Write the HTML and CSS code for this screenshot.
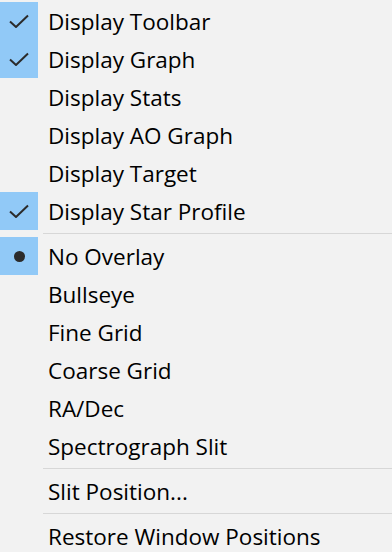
FILE: index.html
```html
<!DOCTYPE html>
<html lang="en">
<head>
    <meta charset="UTF-8">
    <meta name="viewport" content="width=device-width, initial-scale=1.0">
    <title>View menu</title>
    <link rel="stylesheet" href="styles.css">
</head>
<body>
    <ul class="menu">
        <li class="item checked"><span class="mark"><svg viewBox="0 0 20 14" class="tick"><path d="M1 7.5 L7 13 L19 1.5"/></svg></span><span class="label">Display Toolbar</span></li>
        <li class="item checked"><span class="mark"><svg viewBox="0 0 20 14" class="tick"><path d="M1 7.5 L7 13 L19 1.5"/></svg></span><span class="label">Display Graph</span></li>
        <li class="item"><span class="mark"></span><span class="label">Display Stats</span></li>
        <li class="item"><span class="mark"></span><span class="label">Display AO Graph</span></li>
        <li class="item"><span class="mark"></span><span class="label">Display Target</span></li>
        <li class="item checked"><span class="mark"><svg viewBox="0 0 20 14" class="tick"><path d="M1 7.5 L7 13 L19 1.5"/></svg></span><span class="label">Display Star Profile</span></li>
        <li class="sep"></li>
        <li class="item checked"><span class="mark"><span class="dot"></span></span><span class="label">No Overlay</span></li>
        <li class="item"><span class="mark"></span><span class="label">Bullseye</span></li>
        <li class="item"><span class="mark"></span><span class="label">Fine Grid</span></li>
        <li class="item"><span class="mark"></span><span class="label">Coarse Grid</span></li>
        <li class="item"><span class="mark"></span><span class="label">RA/Dec</span></li>
        <li class="item"><span class="mark"></span><span class="label">Spectrograph Slit</span></li>
        <li class="sep"></li>
        <li class="item"><span class="mark"></span><span class="label">Slit Position...</span></li>
        <li class="sep"></li>
        <li class="item"><span class="mark"></span><span class="label">Restore Window Positions</span></li>
    </ul>
</body>
</html>
```
FILE: styles.css
```css
body {
    margin: 0;
    background: #f2f2f2;
    font-family: 'Open Sans', 'Noto Sans', sans-serif;
    color: #000;
    height: 552px;
    overflow: hidden;
}
.menu {
    list-style: none;
    margin: 0;
    padding: 2px 0 0 0;
}
.item {
    display: flex;
    align-items: center;
    height: 38px;
}
.mark {
    width: 38px;
    height: 100%;
    display: flex;
    align-items: center;
    justify-content: center;
    flex-shrink: 0;
}
.checked .mark {
    background: #91c9f7;
}
.tick {
    width: 20px;
    height: 14px;
    fill: none;
    stroke: #2b2b2b;
    stroke-width: 2;
    margin-right: 1px;
}
.dot {
    width: 11px;
    height: 11px;
    border-radius: 50%;
    background: #2b2b2b;
}
.label {
    margin-left: 10px;
    font-size: 22.5px;
    line-height: 1;
    padding-top: 3px;
    white-space: nowrap;
}
.sep {
    height: 1px;
    margin: 3px 0 3px 43px;
    background: #d7d7d7;
}
```
